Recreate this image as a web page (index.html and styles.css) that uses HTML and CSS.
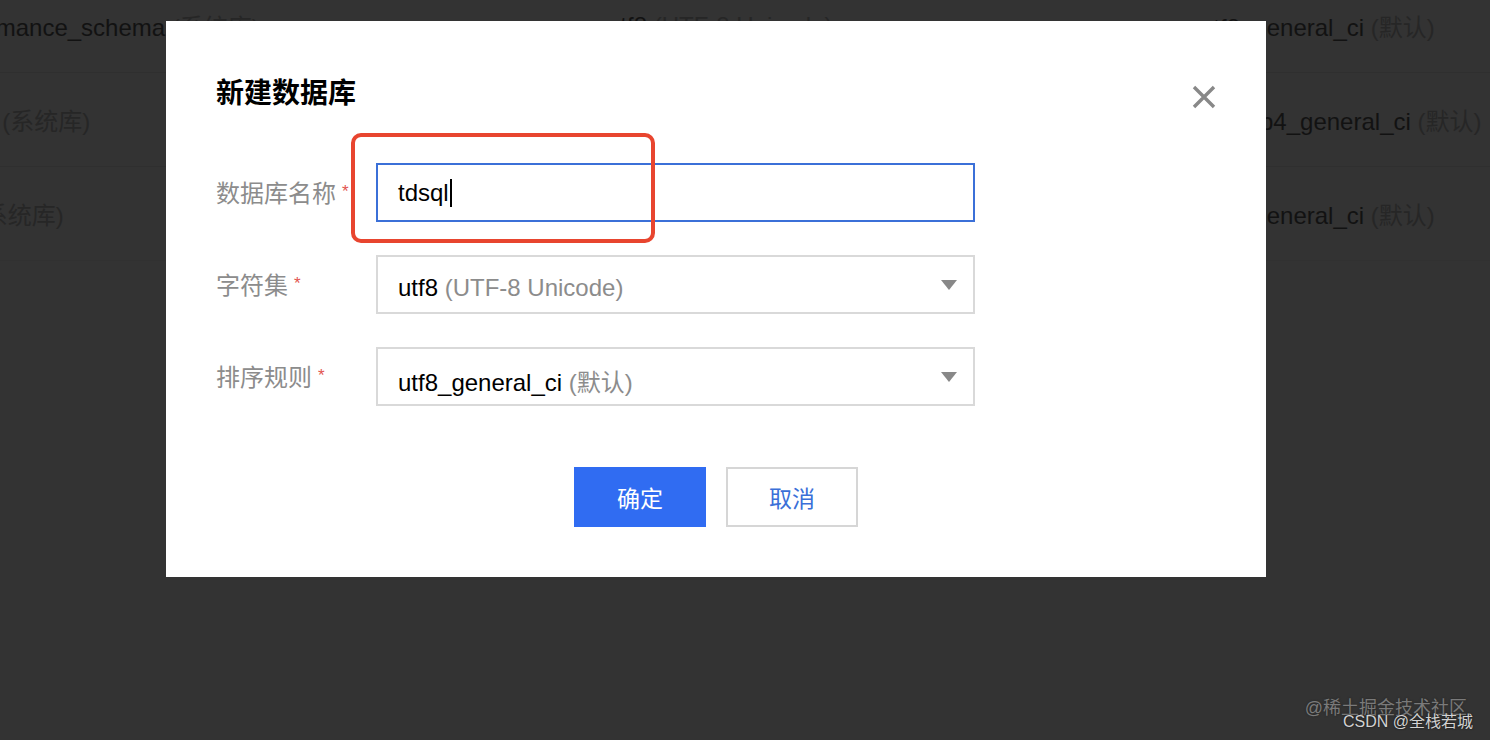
FILE: index.html
```html
<!DOCTYPE html>
<html lang="zh-CN">
<head>
<meta charset="utf-8">
<title>新建数据库</title>
<link rel="stylesheet" href="styles.css">
</head>
<body>
<div class="page">
  <div class="db-table">
    <div class="row">
      <div class="cell c-name">performance_schema <span class="muted">(系统库)</span></div>
      <div class="cell c-charset">utf8 <span class="muted">(UTF-8 Unicode)</span></div>
      <div class="cell c-coll">utf8_general_ci <span class="muted">(默认)</span></div>
    </div>
    <div class="row">
      <div class="cell c-name">mysql <span class="muted">(系统库)</span></div>
      <div class="cell c-charset">utf8mb4 <span class="muted">(UTF-8 Unicode)</span></div>
      <div class="cell c-coll">utf8mb4_general_ci <span class="muted">(默认)</span></div>
    </div>
    <div class="row last">
      <div class="cell c-name">sys <span class="muted">(系统库)</span></div>
      <div class="cell c-charset">utf8 <span class="muted">(UTF-8 Unicode)</span></div>
      <div class="cell c-coll">utf8_general_ci <span class="muted">(默认)</span></div>
    </div>
  </div>

  <div class="modal">
    <div class="modal-head">
      <h2 class="modal-title">新建数据库</h2>
      <button class="close" aria-label="关闭">
        <svg width="24" height="24" viewBox="0 0 24 24"><path d="M2 2 L22 22 M22 2 L2 22" stroke="#888" stroke-width="3.4" fill="none"/></svg>
      </button>
    </div>
    <div class="form">
      <div class="form-row">
        <label class="label">数据库名称<span class="req">*</span></label>
        <div class="field input"><span class="value">tdsql</span><span class="caret"></span></div>
      </div>
      <div class="form-row">
        <label class="label">字符集<span class="req">*</span></label>
        <div class="field select"><span class="value">utf8 <span class="hint">(UTF-8 Unicode)</span></span><span class="arrow"></span></div>
      </div>
      <div class="form-row">
        <label class="label">排序规则<span class="req">*</span></label>
        <div class="field select"><span class="value">utf8_general_ci <span class="hint">(默认)</span></span><span class="arrow"></span></div>
      </div>
    </div>
    <div class="actions">
      <button class="btn primary">确定</button>
      <button class="btn ghost">取消</button>
    </div>
    <div class="annot"></div>
  </div>

  <div class="watermark">
    <div class="wm1">@稀土掘金技术社区</div>
    <div class="wm2">CSDN @全栈若城</div>
  </div>
</div>
</body>
</html>
```

FILE: styles.css
```css
* { box-sizing: border-box; }
html, body {
  margin: 0;
  padding: 0;
  width: 1490px;
  height: 740px;
  overflow: hidden;
  background: #333333;
  font-family: "Liberation Sans", "Noto Sans CJK SC", sans-serif;
}
.page {
  position: relative;
  width: 1490px;
  height: 740px;
  overflow: hidden;
  background: #333333;
}

/* dimmed background table */
.db-table {
  margin-top: -21px;
  margin-left: -67px;
  width: 1600px;
}
.row {
  display: grid;
  grid-template-columns: 674px 593px 1fr;
  height: 94px;
  align-items: center;
  border-bottom: 1px solid #2f2f2f;
}
.row.last { border-bottom-color: #313131; }
.cell {
  font-size: 24px;
  color: #121212;
  white-space: nowrap;
}
.cell .muted { color: #262626; }

/* modal */
.modal {
  position: absolute;
  left: 166px;
  top: 21px;
  width: 1100px;
  height: 556px;
  background: #ffffff;
  padding: 53px 50px 50px 50px;
}
.modal-head {
  display: flex;
  justify-content: space-between;
  align-items: center;
  height: 40px;
}
.modal-title {
  margin: 0;
  font-size: 28px;
  line-height: 40px;
  font-weight: 700;
  color: #000;
}
.close {
  border: 0;
  background: none;
  padding: 0;
  width: 24px;
  height: 24px;
  margin-right: 0;
  margin-top: 6px;
  display: flex;
}

.form {
  margin-top: 49px;
  display: flex;
  flex-direction: column;
  gap: 33px;
}
.form-row {
  display: flex;
  align-items: center;
  height: 59px;
}
.label {
  width: 160px;
  font-size: 24px;
  color: #8c8c8c;
  display: flex;
  align-items: center;
  margin-top: -3px;
}
.req {
  color: #e25450;
  font-size: 17px;
  margin-left: 6px;
  margin-top: 2px;
}
.field {
  width: 599px;
  height: 59px;
  display: flex;
  align-items: center;
  padding-left: 20px;
  padding-right: 16px;
  font-size: 24px;
  color: #000;
}
.input {
  border: 2px solid #3b70d8;
}
.select {
  border: 2px solid #d9d9d9;
  justify-content: space-between;
}
.select .value { padding-top: 7px; }
.caret {
  display: inline-block;
  width: 2px;
  height: 28px;
  background: #000;
  margin-left: 1px;
}
.hint { color: #8c8c8c; }
.arrow {
  width: 0;
  height: 0;
  border-left: 8px solid transparent;
  border-right: 8px solid transparent;
  border-top: 10px solid #888;
}

.actions {
  margin-top: 61px;
  display: flex;
  justify-content: center;
  gap: 20px;
}
.btn {
  width: 132px;
  height: 60px;
  font-family: "Liberation Sans", "Noto Sans CJK SC", sans-serif;
  font-size: 23px;
  padding: 0;
  cursor: pointer;
}
.primary {
  background: #306cf2;
  border: 0;
  color: #fff;
}
.ghost {
  background: #fff;
  border: 2px solid #d6d6d6;
  color: #3a6fd8;
}

/* red annotation */
.annot {
  position: absolute;
  left: 185px;
  top: 112px;
  width: 304px;
  height: 110px;
  border: 4px solid #e8452f;
  border-radius: 10px;
  pointer-events: none;
}

.watermark {
  position: absolute;
  right: 17px;
  bottom: 8px;
  text-align: right;
}
.wm1 {
  font-size: 18px;
  color: #7a7a7a;
  line-height: 20px;
  margin-right: 6px;
  text-shadow: 0 0 2px #222;
}
.wm2 {
  font-size: 16px;
  color: #d2d2d2;
  line-height: 20px;
  margin-top: -6px;
  text-shadow: 0 0 2px #111;
}
```
